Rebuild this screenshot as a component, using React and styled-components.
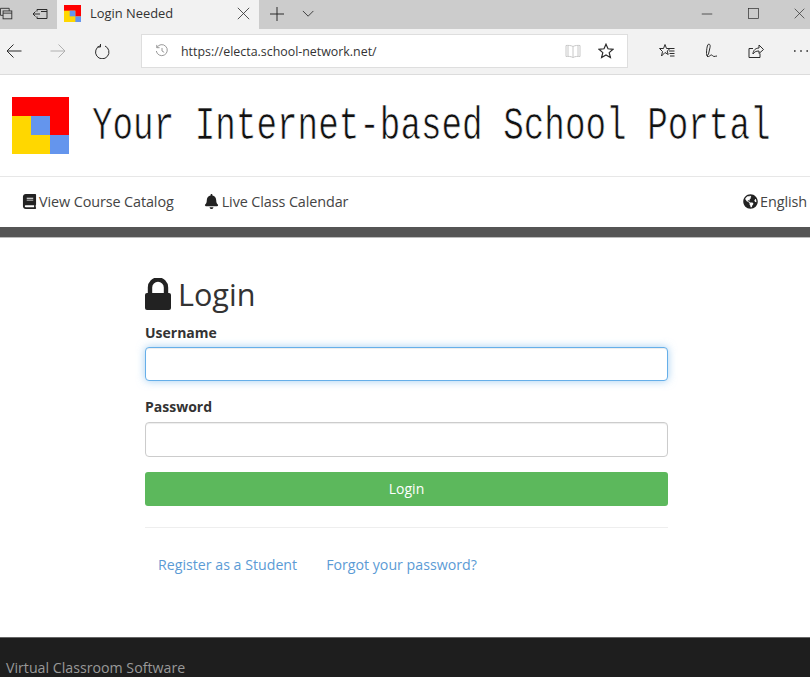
import React from 'react'
import styled, { createGlobalStyle } from 'styled-components'
import { FaBook, FaBell, FaGlobeAmericas } from 'react-icons/fa'

const GlobalStyle = createGlobalStyle`
  html, body {
    margin: 0;
    padding: 0;
    height: 677px;
    overflow: hidden;
    background: #fff;
    font-family: "Open Sans", "Liberation Sans", sans-serif;
  }
`

const Page = styled.div`
  width: 810px;
  height: 677px;
  overflow: hidden;
`

// browser chrome
const TabStrip = styled.div`
  height: 29px;
  background: #cccccc;
  display: flex;
  align-items: center;
  color: #2b2b2b;
`

const StripIcon = styled.div`
  width: ${p => p.$w}px;
  margin-left: ${p => p.$ml || 0}px;
  padding-bottom: 2px;
  display: flex;
  justify-content: center;
  flex-shrink: 0;
`

const Tab = styled.div`
  width: 202px;
  height: 29px;
  margin-left: 9px;
  background: #f2f2f2;
  display: flex;
  align-items: center;
  box-sizing: border-box;
  padding: 0 9px 3px 7px;
  flex-shrink: 0;
`

const TabTitle = styled.span`
  font-size: 12.9px;
  margin-left: 9px;
  flex: 1;
  color: #333;
`

const Spacer = styled.div`
  flex: 1;
`

const WindowControls = styled.div`
  display: flex;
  width: 126px;
  flex-shrink: 0;
  overflow: hidden;
  padding-bottom: 2px;
`

const WindowButton = styled.div`
  width: 46px;
  flex-shrink: 0;
  display: flex;
  justify-content: center;
`

const Toolbar = styled.div`
  height: 46px;
  box-sizing: border-box;
  background: #f2f2f2;
  border-bottom: 1px solid #dcdcdc;
  display: flex;
  align-items: center;
  padding-bottom: 1px;
  color: #2b2b2b;
`

const ToolIcon = styled.div`
  width: ${p => p.$w}px;
  margin-left: ${p => p.$ml || 0}px;
  display: flex;
  justify-content: center;
  flex-shrink: 0;
  color: ${p => p.$color || 'inherit'};
`

const AddressBar = styled.div`
  width: 487px;
  height: 34px;
  margin-left: 30px;
  box-sizing: border-box;
  background: #fff;
  border: 1px solid #dedede;
  display: flex;
  align-items: center;
  flex-shrink: 0;
  padding-left: 13px;
`

const Url = styled.span`
  font-size: 12.4px;
  color: #333;
  margin-left: 12px;
  flex: 1;
`

// site header
const Header = styled.header`
  height: 102px;
  box-sizing: border-box;
  border-bottom: 1px solid #e7e7e7;
  display: flex;
  align-items: center;
  padding: 0 0 1px 12px;
`

const Title = styled.h1`
  margin: 3px 0 0 23px;
  font-family: "Liberation Mono", monospace;
  font-weight: 400;
  font-size: 47px;
  line-height: 1;
  color: #111;
  white-space: nowrap;
  transform: scaleX(0.729);
  transform-origin: left center;
  -webkit-text-stroke: 0.7px #fff;
`

const Nav = styled.nav`
  height: 50px;
  box-sizing: border-box;
  display: flex;
  align-items: center;
  padding: 0 3px 2px 22px;
  font-size: 14.4px;
  color: #444;
`

const NavItem = styled.a`
  display: flex;
  align-items: center;
  gap: ${p => p.$gap || 2}px;
  margin-right: ${p => p.$mr || 0}px;
  letter-spacing: -0.1px;
  svg {
    color: #222;
    font-size: 15px;
  }
`

const DarkBar = styled.div`
  height: 11px;
  background: #555;
  border-bottom: 1px solid #bbb;
  box-sizing: border-box;
`

// login form
const Main = styled.main`
  height: 399px;
  box-sizing: border-box;
  padding: 33px 0 0 145px;
`

const Form = styled.form`
  width: 523px;
`

const Heading = styled.h2`
  margin: 0;
  height: 46px;
  display: flex;
  align-items: center;
  gap: 7px;
  font-size: 30.6px;
  font-weight: 400;
  color: #333;
`

const Label = styled.label`
  display: block;
  font-size: 14px;
  font-weight: 700;
  line-height: 19px;
  color: #333;
  margin-top: ${p => p.$mt}px;
  margin-bottom: ${p => p.$mb}px;
`

const Input = styled.input`
  display: block;
  width: 100%;
  height: ${p => p.$h}px;
  box-sizing: border-box;
  border: 1px solid ${p => (p.$focus ? '#66afe9' : '#ccc')};
  border-radius: 4px;
  outline: none;
  background: #fff;
  box-shadow: ${p => (p.$focus
    ? 'inset 0 1px 1px rgba(0,0,0,.075), 0 0 8px rgba(102,175,233,.6)'
    : 'inset 0 1px 1px rgba(0,0,0,.075)')};
`

const Submit = styled.button`
  display: block;
  width: 100%;
  height: 34px;
  margin-top: 15px;
  padding: 0 0 2px;
  border: none;
  border-radius: 3px;
  background: #5cb85c;
  color: #fff;
  font-family: inherit;
  font-size: 14px;
`

const Rule = styled.hr`
  margin: 21px 0 0;
  border: none;
  border-top: 1px solid #eee;
`

const Links = styled.div`
  display: flex;
  gap: 29px;
  padding: 27px 0 0 13px;
`

const LinkItem = styled.a`
  font-size: 14.2px;
  line-height: 19px;
  color: #5b9bd5;
`

const Footer = styled.footer`
  height: 40px;
  box-sizing: border-box;
  background: #1e1e1e;
  border-top: 1px solid #666;
  padding: 20px 0 0 6px;
  font-size: 14.2px;
  line-height: 19px;
  color: #999;
  white-space: nowrap;
`

const Line = ({ size = 16, children, w = 1 }) => (
  <svg width={size} height={size} viewBox='0 0 16 16' fill='none' stroke='currentColor' strokeWidth={w}>
    {children}
  </svg>
)

const LogoMark = ({ size }) => (
  <svg width={size} height={size} viewBox='0 0 57 57' style={{ display: 'block', flexShrink: 0 }}>
    <rect width='57' height='57' fill='#ffd700' />
    <rect width='57' height='19' fill='#ff0000' />
    <rect x='38' width='19' height='38' fill='#ff0000' />
    <rect x='19' y='19' width='19' height='19' fill='#6495ed' />
    <rect x='38' y='38' width='19' height='19' fill='#6495ed' />
  </svg>
)

const LockIcon = () => (
  <svg width='26' height='32' viewBox='0 0 26 32' style={{ flexShrink: 0 }}>
    <rect y='15' width='26' height='17' rx='2' fill='#222' />
    <path d='M5 16V9.500a8 8 0 0 1 16 0V16' fill='none' stroke='#222' strokeWidth='4.400' />
  </svg>
)

export default function App () {
  return (
    <Page>
      <GlobalStyle />
      <TabStrip>
        <StripIcon $w={14}>
          <Line size={14}>
            <path d='M0.5 1.5h10v3M0.5 1.5v8h3' />
            <rect x='3.5' y='4.5' width='10' height='9' />
            <path d='M3.5 7h10' />
          </Line>
        </StripIcon>
        <StripIcon $w={16} $ml={18}>
          <Line>
            <path d='M5 3.5h10v9H5v-2M5 5.5v-2M15 5.5H9' />
            <path d='M8 8H1M3.5 5.5L1 8l2.5 2.5' />
          </Line>
        </StripIcon>
        <Tab>
          <LogoMark size={17} />
          <TabTitle>Login Needed</TabTitle>
          <Line size={13}><path d='M1 1l14 14M15 1L1 15' /></Line>
        </Tab>
        <StripIcon $w={16} $ml={10}>
          <Line><path d='M8 1v14M1 8h14' /></Line>
        </StripIcon>
        <StripIcon $w={14} $ml={17}>
          <Line size={14}><path d='M1 4.5l6 6 6-6' /></Line>
        </StripIcon>
        <Spacer />
        <WindowControls>
          <WindowButton><Line size={12}><path d='M1 8h14' /></Line></WindowButton>
          <WindowButton><Line size={11}><rect x='0.8' y='0.8' width='14.4' height='14.4' /></Line></WindowButton>
          <WindowButton><Line size={11}><path d='M1 1l14 14M15 1L1 15' /></Line></WindowButton>
        </WindowControls>
      </TabStrip>

      <Toolbar>
        <ToolIcon $w={16} $ml={6}>
          <Line><path d='M15.5 8H1M7.5 1.5L1 8l6.5 6.5' /></Line>
        </ToolIcon>
        <ToolIcon $w={16} $ml={28} $color='#b0b0b0'>
          <Line><path d='M0.5 8H15M8.5 1.5L15 8l-6.5 6.5' /></Line>
        </ToolIcon>
        <ToolIcon $w={16} $ml={29}>
          <Line><path d='M5 1.800A6.700 6.700 0 1 0 10 2M5.500 0v3H2.500' transform='translate(0 1)' /></Line>
        </ToolIcon>
        <AddressBar>
          <ToolIcon $w={14} $color='#8a8a8a'>
            <Line size={14}>
              <path d='M2.200 4A6.300 6.300 0 1 1 1.500 8M2 1v3.200h3.200M8 4.500V8l2.500 1.500' />
            </Line>
          </ToolIcon>
          <Url>https://electa.school-network.net/</Url>
          <ToolIcon $w={16} $color='#c8c8c8'>
            <Line><path d='M8 3.500C6 2.300 3 2.300 1 2.500v11c2-.2 5-.2 7 1 2-1.200 5-1.200 7-1v-11c-2-.2-5-.2-7 1zM8 3.500v11M3 2.500v11M13 2.500v11' /></Line>
          </ToolIcon>
          <ToolIcon $w={16} $ml={17}>
            <Line w={1.2}><path d='M8 1.200l2 4.600 5 .5-3.800 3.300 1.200 4.900L8 12l-4.400 2.500 1.200-4.900L1 6.300l5-.5z' /></Line>
          </ToolIcon>
          <ToolIcon $w={13} />
        </AddressBar>
        <ToolIcon $w={16} $ml={31}>
          <Line><path d='M6 1.500l1.500 4H11L8.200 8l1 3.500L6 9.500 2.500 13l1-4.500L.5 5.500h4zM10 8h5.500M10.500 10.500h5M11 13h4.500M11 5.500h4.500' /></Line>
        </ToolIcon>
        <ToolIcon $w={16} $ml={30}>
          <Line><path d='M3 1.500c2-1 2.500 1 2 3L3.500 11 2 13l-.5-2.500C1.500 7 2 3 3 1.500zM2 13.500c2 .5 3-1 4-1.500s2 1.500 3 1.500 2-.5 3-.5' /></Line>
        </ToolIcon>
        <ToolIcon $w={16} $ml={27}>
          <Line><path d='M1 5.500v9h11v-4M1 5.500h4M5 11c0-4 3-6 6-6V2l4.500 4.500L11 10.500V8c-3 0-5 1-6 3z' /></Line>
        </ToolIcon>
        <ToolIcon $w={16} $ml={29}>
          <Line size={16} w={1.6}><path d='M1 8h1.600M7.200 8h1.600M13.400 8H15' /></Line>
        </ToolIcon>
      </Toolbar>

      <Header>
        <LogoMark size={57} />
        <Title>Your Internet-based School Portal</Title>
      </Header>

      <Nav>
        <NavItem $mr={30}><FaBook />View Course Catalog</NavItem>
        <NavItem $gap={3}><FaBell />Live Class Calendar</NavItem>
        <Spacer />
        <NavItem><FaGlobeAmericas />English</NavItem>
      </Nav>
      <DarkBar />

      <Main>
        <Form>
          <Heading><LockIcon />Login</Heading>
          <Label $mt={6} $mb={5}>Username</Label>
          <Input $h={34} $focus />
          <Label $mt={16} $mb={6}>Password</Label>
          <Input $h={35} />
          <Submit type='button'>Login</Submit>
          <Rule />
          <Links>
            <LinkItem>Register as a Student</LinkItem>
            <LinkItem>Forgot your password?</LinkItem>
          </Links>
        </Form>
      </Main>
      <Footer>Virtual Classroom Software</Footer>
    </Page>
  )
}
